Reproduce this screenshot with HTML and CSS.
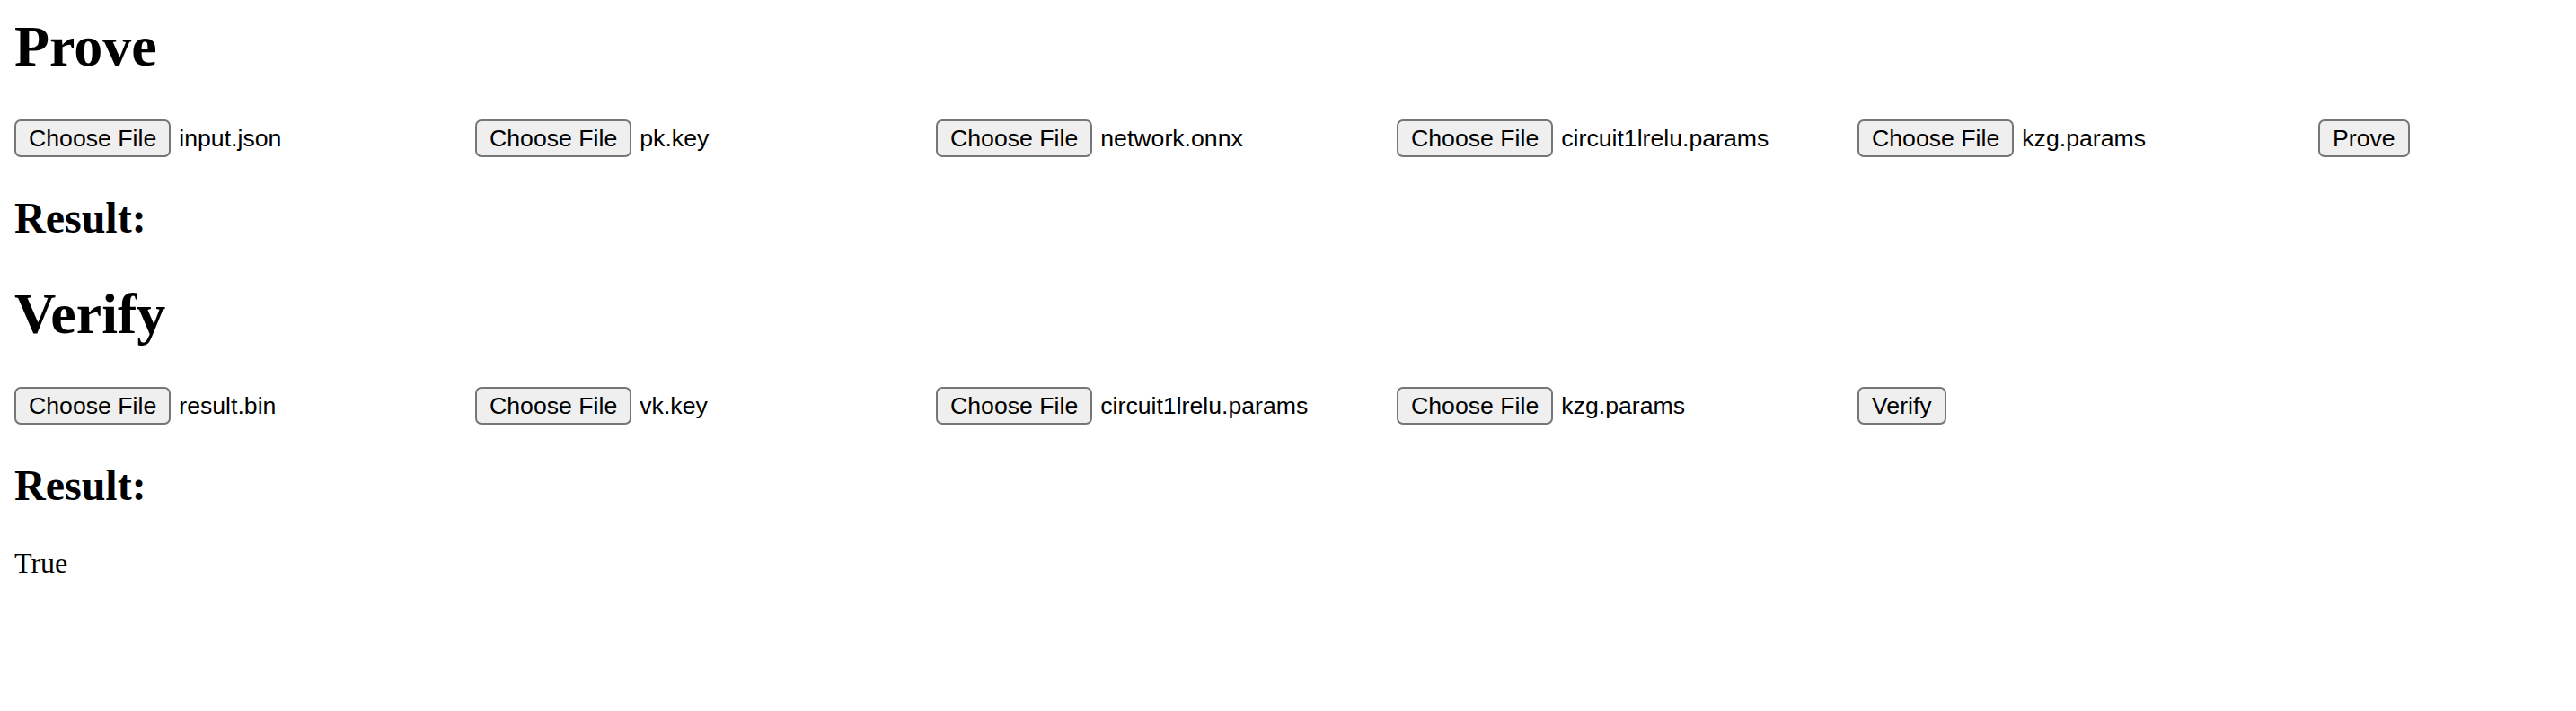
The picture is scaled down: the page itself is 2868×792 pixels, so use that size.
FILE: index.html
```html
<!DOCTYPE html>
<html lang="en">
<head>
<meta charset="utf-8">
<title>Prove / Verify</title>
<link rel="stylesheet" href="styles.css">
</head>
<body>
<main class="page">
  <section class="panel">
    <h1 class="title">Prove</h1>
    <div class="row">
      <div class="file"><button class="btn" type="button">Choose File</button><span class="fname">input.json</span></div>
      <div class="file"><button class="btn" type="button">Choose File</button><span class="fname">pk.key</span></div>
      <div class="file"><button class="btn" type="button">Choose File</button><span class="fname">network.onnx</span></div>
      <div class="file"><button class="btn" type="button">Choose File</button><span class="fname">circuit1lrelu.params</span></div>
      <div class="file"><button class="btn" type="button">Choose File</button><span class="fname">kzg.params</span></div>
      <div class="file"><button class="btn" type="button">Prove</button></div>
    </div>
    <h2 class="result">Result:</h2>
  </section>
  <section class="panel">
    <h1 class="title">Verify</h1>
    <div class="row">
      <div class="file"><button class="btn" type="button">Choose File</button><span class="fname">result.bin</span></div>
      <div class="file"><button class="btn" type="button">Choose File</button><span class="fname">vk.key</span></div>
      <div class="file"><button class="btn" type="button">Choose File</button><span class="fname">circuit1lrelu.params</span></div>
      <div class="file"><button class="btn" type="button">Choose File</button><span class="fname">kzg.params</span></div>
      <div class="file"><button class="btn" type="button">Verify</button></div>
    </div>
    <h2 class="result">Result:</h2>
    <p class="output">True</p>
  </section>
</main>
</body>
</html>
```
FILE: styles.css
```css
html, body {
  margin: 0;
  padding: 0;
  background: #ffffff;
}

body {
  font-family: "Liberation Serif", "Times New Roman", serif;
  color: #000000;
}

.page {
  padding: 16px 16px 0 16px;
  display: flex;
  flex-direction: column;
}

.panel {
  display: flex;
  flex-direction: column;
}

.panel + .panel {
  margin-top: 43px;
}

.title {
  margin: 0;
  font-size: 64px;
  line-height: 72px;
  font-weight: bold;
}

.row {
  margin-top: 45px;
  display: grid;
  grid-template-columns: repeat(5, 513px) max-content;
  justify-content: start;
  align-items: center;
  height: 42px;
}

.file {
  display: flex;
  align-items: center;
  white-space: nowrap;
}

.btn {
  box-sizing: border-box;
  height: 42px;
  margin: 0;
  padding: 0 14px;
  border: 2px solid #767676;
  border-radius: 7px;
  background: #efefef;
  color: #000000;
  font-family: "Liberation Sans", Arial, sans-serif;
  font-size: 26.67px;
  line-height: 1;
}

.fname {
  margin-left: 9px;
  font-family: "Liberation Sans", Arial, sans-serif;
  font-size: 26.67px;
  color: #000000;
}

.result {
  margin: 40px 0 0 0;
  font-size: 48px;
  line-height: 56px;
  font-weight: bold;
}

.output {
  margin: 40px 0 0 0;
  font-size: 32px;
  line-height: 36px;
}
```
